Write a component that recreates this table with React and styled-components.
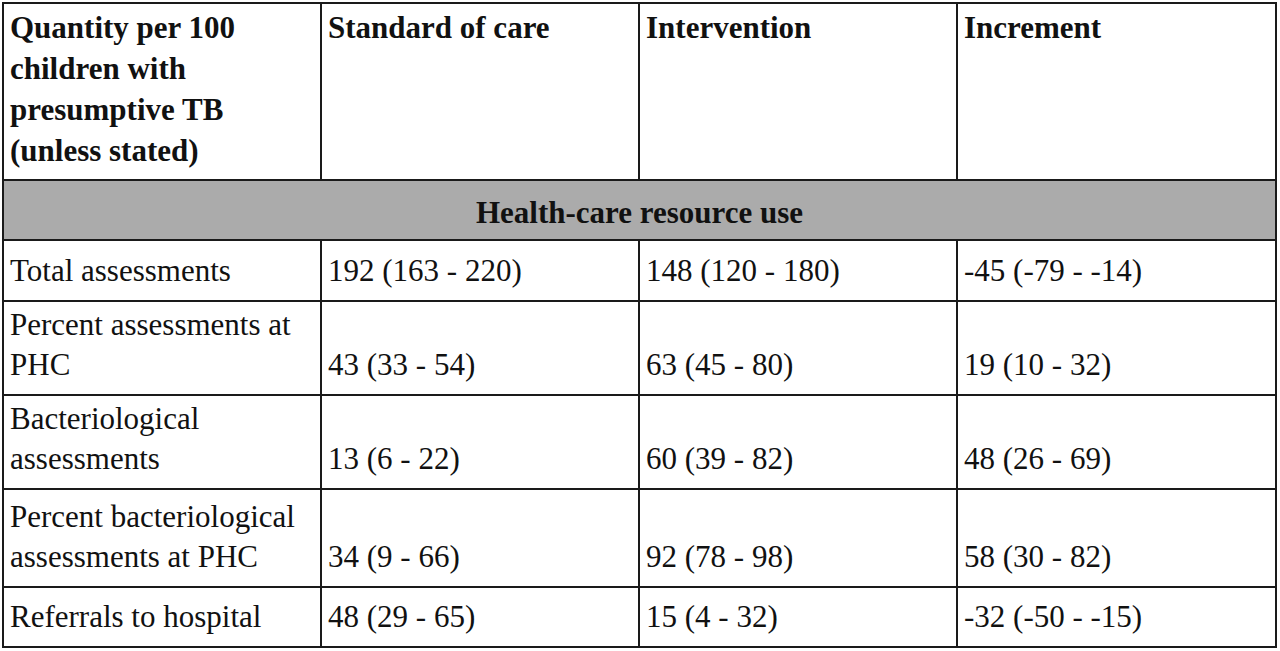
import styled, { createGlobalStyle } from "styled-components";

const GlobalStyle = createGlobalStyle`
  body { margin: 0; }
`;

const Page = styled.div`
  padding: 2px 0 0 2px;
  width: 1280px;
  box-sizing: border-box;
`;

const Grid = styled.div`
  display: grid;
  grid-template-columns: 316px 316px 316px 317px;
  grid-template-rows: 175px 58px 59px 92px 92px 96px 58px;
  gap: 2px;
  padding: 2px;
  width: max-content;
  background: #1a1a1a;
  font-family: "Liberation Serif", serif;
  font-size: 31px;
  color: #111111;
`;

const HeadCell = styled.div`
  background: #ffffff;
  padding: 3px 6px 0 6px;
  font-family: "Liberation Serif", serif;
  font-weight: 700;
  line-height: 41px;
`;

const SectionCell = styled.div`
  grid-column: 1 / -1;
  background: #ababab;
  padding-top: 12px;
  text-align: center;
  font-family: "Liberation Serif", serif;
  font-weight: 700;
  line-height: 40px;
`;

const Cell = styled.div`
  background: #ffffff;
  display: flex;
  flex-direction: column;
  justify-content: flex-end;
  padding: 0 6px 9px 6px;
  font-family: "Liberation Serif", serif;
  line-height: 40px;
  white-space: nowrap;
`;

const rows = [
  { label: ["Total assessments"], soc: "192 (163 - 220)", int: "148 (120 - 180)", inc: "-45 (-79 - -14)" },
  { label: ["Percent assessments at", "PHC"], soc: "43 (33 - 54)", int: "63 (45 - 80)", inc: "19 (10 - 32)" },
  { label: ["Bacteriological", "assessments"], soc: "13 (6 - 22)", int: "60 (39 - 82)", inc: "48 (26 - 69)" },
  { label: ["Percent bacteriological", "assessments at PHC"], soc: "34 (9 - 66)", int: "92 (78 - 98)", inc: "58 (30 - 82)" },
  { label: ["Referrals to hospital"], soc: "48 (29 - 65)", int: "15 (4 - 32)", inc: "-32 (-50 - -15)" },
];

export default function App() {
  return (
    <Page>
      <GlobalStyle />
      <Grid>
        <HeadCell>
          Quantity per 100
          <br />
          children with
          <br />
          presumptive TB
          <br />
          (unless stated)
        </HeadCell>
        <HeadCell>Standard of care</HeadCell>
        <HeadCell>Intervention</HeadCell>
        <HeadCell>Increment</HeadCell>

        <SectionCell>Health-care resource use</SectionCell>

        {rows.map((r) => [
          <Cell key={r.label[0] + "-l"}>
            {r.label.map((l) => (
              <span key={l}>{l}</span>
            ))}
          </Cell>,
          <Cell key={r.label[0] + "-s"}>{r.soc}</Cell>,
          <Cell key={r.label[0] + "-i"}>{r.int}</Cell>,
          <Cell key={r.label[0] + "-c"}>{r.inc}</Cell>,
        ])}
      </Grid>
    </Page>
  );
}
